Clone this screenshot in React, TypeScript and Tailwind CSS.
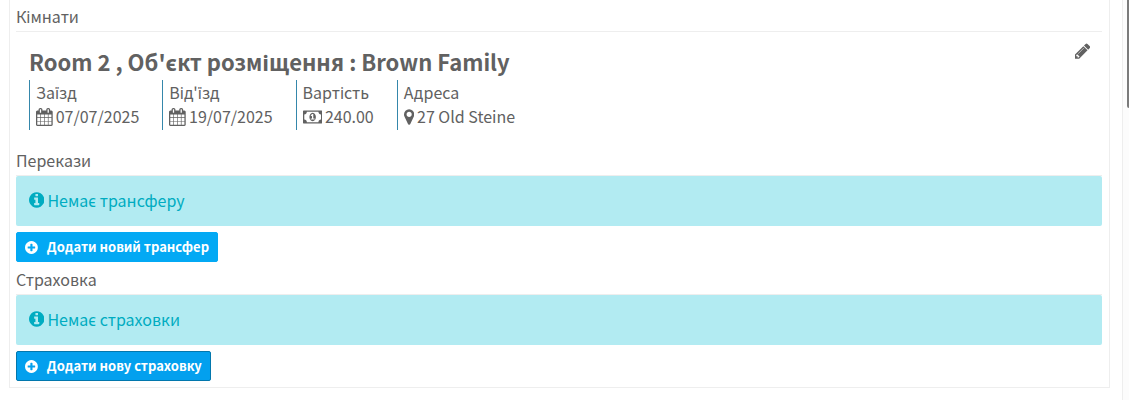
import type { ReactNode } from "react";

type IconName = "calendar" | "money" | "marker" | "info" | "plus" | "pencil";

const ICONS: Record<IconName, { viewBox: string; path: string }> = {
  calendar: {
    viewBox: "64 0 1664 1792",
    path: "M192 1664h288v-288h-288v288zm352 0h320v-288h-320v288zm-352-352h288v-320h-288v320zm352 0h320v-320h-320v320zm-352-384h288v-288h-288v288zm736 736h320v-288h-320v288zm-384-736h320v-288h-320v288zm768 736h288v-288h-288v288zm-384-352h320v-320h-320v320zm-352-864v-288q0-13-9.5-22.5t-22.5-9.5h-64q-13 0-22.5 9.5t-9.5 22.5v288q0 13 9.5 22.5t22.5 9.5h64q13 0 22.5-9.5t9.5-22.5zm736 864h288v-320h-288v320zm-384-384h320v-288h-320v288zm384 0h288v-288h-288v288zm32-480v-288q0-13-9.5-22.5t-22.5-9.5h-64q-13 0-22.5 9.5t-9.5 22.5v288q0 13 9.5 22.5t22.5 9.5h64q13 0 22.5-9.5t9.5-22.5zm384-64v1280q0 52-38 90t-90 38h-1408q-52 0-90-38t-38-90v-1280q0-52 38-90t90-38h128v-96q0-66 47-113t113-47h64q66 0 113 47t47 113v96h384v-96q0-66 47-113t113-47h64q66 0 113 47t47 113v96h128q52 0 90 38t38 90z",
  },
  money: {
    viewBox: "0 0 1920 1792",
    path: "M768 1152h384v-96h-128v-448h-114l-148 137 77 80q42-37 55-57h2v288h-128v96zm512-256q0 70-21 142t-59.5 134-101.5 101-138 39-138-39-101.5-101-59.5-134-21-142 21-142 59.5-134 101.5-101 138-39 138 39 101.5 101 59.5 134 21 142zm512 256v-512q-106 0-181-75t-75-181h-1152q0 106-75 181t-181 75v512q106 0 181 75t75 181h1152q0-106 75-181t181-75zm128-832v1152q0 26-19 45t-45 19h-1792q-26 0-45-19t-19-45v-1152q0-26 19-45t45-19h1792q26 0 45 19t19 45z",
  },
  marker: {
    viewBox: "0 0 1024 1792",
    path: "M768 640q0-106-75-181t-181-75-181 75-75 181 75 181 181 75 181-75 75-181zm256 0q0 109-33 179l-364 774q-16 33-47.5 52t-67.5 19-67.5-19-46.5-52l-365-774q-33-70-33-179 0-212 150-362t362-150 362 150 150 362z",
  },
  info: {
    viewBox: "0 0 1536 1792",
    path: "M1024 1376v-160q0-14-9-23t-23-9h-96v-512q0-14-9-23t-23-9h-320q-14 0-23 9t-9 23v160q0 14 9 23t23 9h96v320h-96q-14 0-23 9t-9 23v160q0 14 9 23t23 9h448q14 0 23-9t9-23zm-128-896v-160q0-14-9-23t-23-9h-192q-14 0-23 9t-9 23v160q0 14 9 23t23 9h192q14 0 23-9t9-23zm640 416q0 209-103 385.5t-279.5 279.5-385.5 103-385.5-103-279.5-279.5-103-385.5 103-385.5 279.5-279.5 385.5-103 385.5 103 279.5 279.5 103 385.5z",
  },
  plus: {
    viewBox: "0 0 1536 1792",
    path: "M1216 960v-128q0-26-19-45t-45-19h-256v-256q0-26-19-45t-45-19h-128q-26 0-45 19t-19 45v256h-256q-26 0-45 19t-19 45v128q0 26 19 45t45 19h256v256q0 26 19 45t45 19h128q26 0 45-19t19-45v-256h256q26 0 45-19t19-45zm320-64q0 209-103 385.5t-279.5 279.5-385.5 103-385.5-103-279.5-279.5-103-385.5 103-385.5 279.5-279.5 385.5-103 385.5 103 279.5 279.5 103 385.5z",
  },
  pencil: {
    viewBox: "128 0 1536 1792",
    path: "M491 1536l91-91-235-235-91 91v107h128v128h107zm523-928q0-22-22-22-10 0-17 7l-542 542q-7 7-7 17 0 22 22 22 10 0 17-7l542-542q7-7 7-17zm-54-192l416 416-832 832h-416v-416zm683 96q0 53-37 90l-166 166-416-416 166-165q36-38 90-38 53 0 91 38l235 234q37 39 37 91z",
  },
};

function Icon({ name, className }: { name: IconName; className: string }) {
  const { viewBox, path } = ICONS[name];

  return (
    <svg
      viewBox={viewBox}
      fill="currentColor"
      aria-hidden="true"
      className={`w-auto shrink-0 ${className}`}
    >
      <path d={path} />
    </svg>
  );
}

const details: { label: string; icon: IconName; value: string }[] = [
  { label: "Заїзд", icon: "calendar", value: "07/07/2025" },
  { label: "Від'їзд", icon: "calendar", value: "19/07/2025" },
  { label: "Вартість", icon: "money", value: "240.00" },
  { label: "Адреса", icon: "marker", value: "27 Old Steine" },
];

function SectionTitle({ children }: { children: ReactNode }) {
  return (
    <h2 className="border-b border-[#eeeeee] pb-[3px] leading-6">{children}</h2>
  );
}

function EmptyNotice({ children }: { children: ReactNode }) {
  return (
    <div className="flex h-[50px] items-center gap-[3px] rounded-xs bg-[#b2ebf2] px-[13px] pb-[3px] text-[#00acc1]">
      <Icon name="info" className="h-[18px]" />
      <p>{children}</p>
    </div>
  );
}

function AddButton({
  children,
  active,
}: {
  children: ReactNode;
  active?: boolean;
}) {
  return (
    <button
      type="button"
      className={
        active
          ? "mt-1.5 flex h-[30px] items-center gap-[9px] rounded-xs border border-[#0277ad] bg-[#03a0ee] px-2 text-[13px] font-bold text-white"
          : "mt-1.5 flex h-[30px] items-center gap-[9px] rounded-xs border border-[#03a9f4] bg-[#03a9f4] px-2 text-[13px] font-bold text-white"
      }
    >
      <Icon name="plus" className="h-[15px]" />
      {children}
    </button>
  );
}

export default function App() {
  return (
    <div className="flex min-h-screen bg-white font-['Noto_Sans_CJK_SC','Noto_Sans',sans-serif] text-base text-[#616161]">
      <main className="min-w-0 flex-1 border-r border-[#eeeeee] pr-3 pl-[9px]">
        <div className="border-x border-b border-[#eeeeee] px-1.5 pt-1 pb-1.5">
          <div className="pr-px">
            <SectionTitle>Кімнати</SectionTitle>

            <div className="flex items-start justify-between pt-2.5 pr-3 pb-[18px] pl-[13px]">
              <div className="pt-[3px]">
                <h3 className="pb-[3px] text-[22px] leading-8 font-bold">
                  Room 2 , Об'єкт розміщення : Brown Family
                </h3>
                <dl className="flex">
                  {details.map((item) => (
                    <div
                      key={item.label}
                      className="border-l border-[#3587ab] pr-[23px] pb-px pl-1.5"
                    >
                      <dt className="leading-6">{item.label}</dt>
                      <dd className="flex items-center gap-[3px] leading-[25px]">
                        <Icon name={item.icon} className="h-[18px]" />
                        {item.value}
                      </dd>
                    </div>
                  ))}
                </dl>
              </div>
              <button type="button" aria-label="Edit">
                <Icon name="pencil" className="h-[18px]" />
              </button>
            </div>

            <section>
              <SectionTitle>Перекази</SectionTitle>
              <EmptyNotice>Немає трансферу</EmptyNotice>
              <AddButton>Додати новий трансфер</AddButton>
            </section>

            <section className="pt-[5px]">
              <SectionTitle>Страховка</SectionTitle>
              <EmptyNotice>Немає страховки</EmptyNotice>
              <AddButton active>Додати нову страховку</AddButton>
            </section>
          </div>
        </div>
      </main>
      <div className="w-1.5 bg-[#fcfcfc]">
        <div className="ml-auto h-27 w-0.5 rounded-bl-xs bg-[#7b7b7b]" />
      </div>
    </div>
  );
}
